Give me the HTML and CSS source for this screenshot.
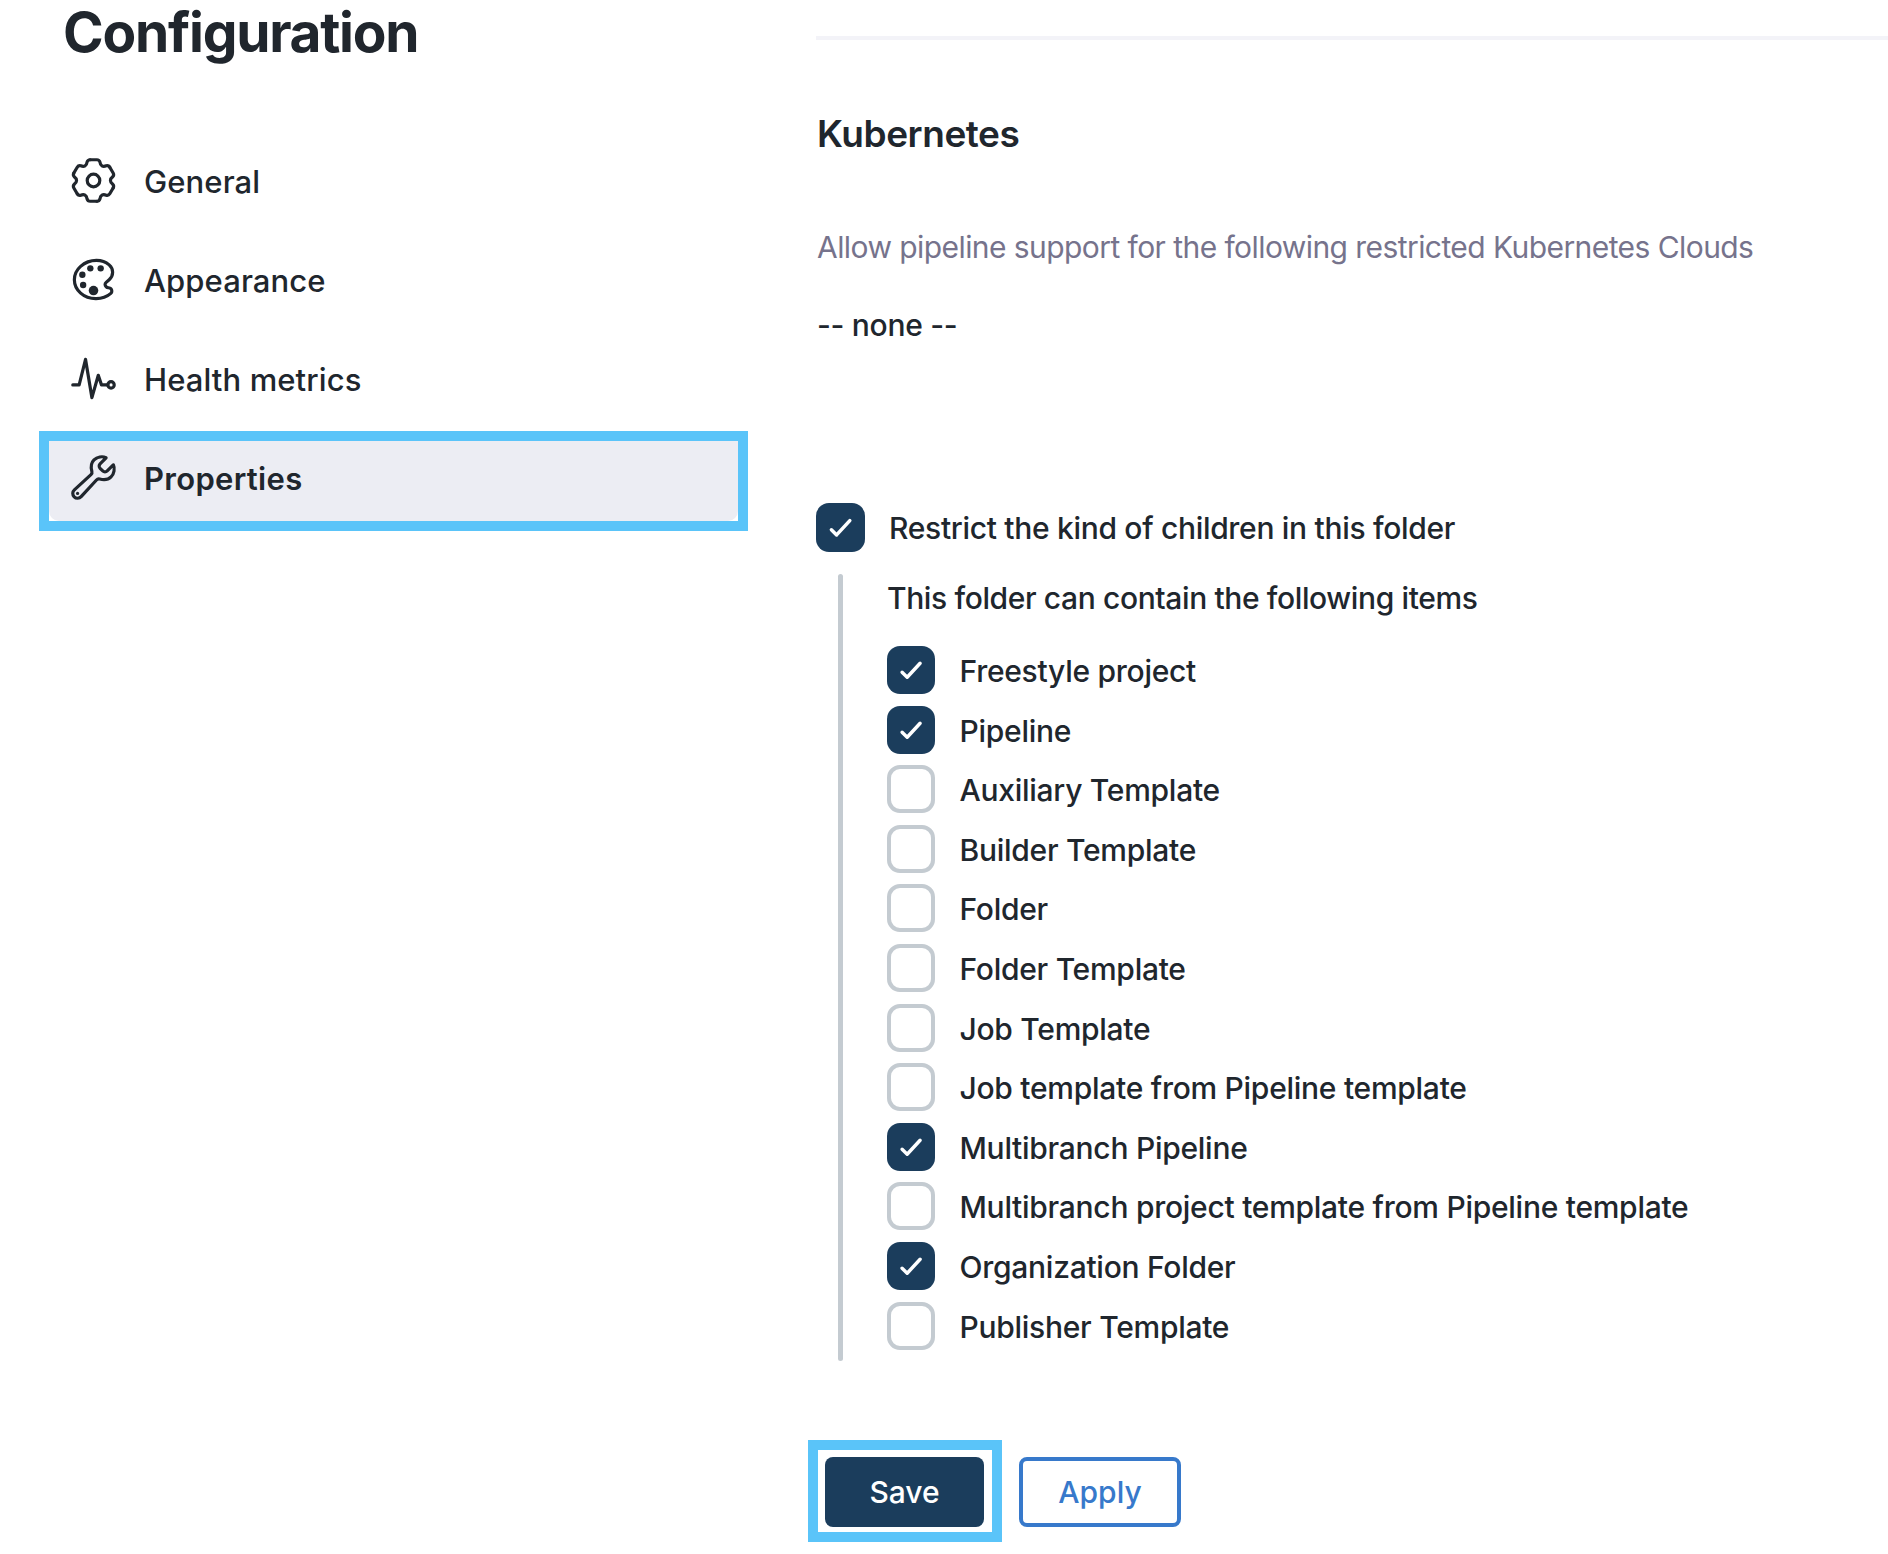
FILE: index.html
```html
<!DOCTYPE html>
<html lang="en">
<head>
<meta charset="utf-8">
<title>Configuration</title>
<link rel="stylesheet" href="styles.css">
</head>
<body>
<svg class="defs" aria-hidden="true">
  <symbol id="check" viewBox="0 0 49 49"><path d="M15.4 26.8 20.6 31.9 33.8 17.6"/></symbol>
  <path id="tooth" d="M-10-61H10Q17-61 19-54C20-43.5 27.7-39.1 37.3-43.5Q44.3-45.2 47.8-39.2"/>
</svg>
<div class="page">
  <aside class="sidebar">
    <h1 class="title">Configuration</h1>
    <nav class="nav">
      <a class="nav-item"><svg class="icon" viewBox="-75 -75 150 150"><g stroke-width="9"><use href="#tooth"/><use href="#tooth" transform="rotate(60)"/><use href="#tooth" transform="rotate(120)"/><use href="#tooth" transform="rotate(180)"/><use href="#tooth" transform="rotate(240)"/><use href="#tooth" transform="rotate(300)"/><circle r="18.5"/></g></svg><span>General</span></a>
      <a class="nav-item"><svg class="icon" viewBox="0 0 512 512"><path d="M430.11 347.9c-6.6-6.1-16.3-7.6-24.6-9-11.5-1.9-15.9-4-22.6-10-14.3-12.7-14.3-31.1 0-43.8l30.3-26.9c46.4-41 46.4-108.2 0-149.2-34.2-30.1-80.1-45-127.8-45-55.7 0-113.9 20.3-158.8 60.1-83.5 73.8-83.5 194.7 0 268.5 41.5 36.7 97.5 55 152.9 55.4h1.7c55.4 0 110-17.9 148.8-52.4 14.4-12.7 11.99-36.6.1-47.7z"/><g class="dots"><circle cx="144" cy="208" r="32"/><circle cx="152" cy="311" r="32"/><circle cx="224" cy="144" r="32"/><circle cx="256" cy="367" r="48"/><circle cx="328" cy="144" r="32"/></g></svg><span>Appearance</span></a>
      <a class="nav-item"><svg class="icon" viewBox="0 0 512 512"><path d="M48 320h64l64-256 64 384 64-224 32 96h64"/><circle cx="432" cy="320" r="32"/></svg><span>Health metrics</span></a>
      <div class="callout callout-nav">
        <a class="nav-item nav-item-active"><svg class="icon" viewBox="0 0 512 512"><path d="M393.87 190a32.1 32.1 0 01-45.25 0l-26.57-26.57a32.09 32.09 0 010-45.26L382.19 58a1 1 0 00-.3-1.64c-38.82-16.64-89.15-8.16-121.11 23.57-30.58 30.35-32.32 76-21.12 115.62a31.93 31.93 0 01-9.06 32.08L64 380a48.17 48.17 0 1068 68l153.86-167a31.93 31.93 0 0131.6-9.13c39.54 10.59 84.54 8.6 114.72-21.19 32.49-32 39.5-88.56 23.75-120.93a1 1 0 00-1.6-.26z"/><g class="dots"><circle cx="96" cy="416" r="16"/></g></svg><span>Properties</span></a>
      </div>
    </nav>
  </aside>
  <main class="main">
    <hr class="rule">
    <h2 class="section-title">Kubernetes</h2>
    <p class="description">Allow pipeline support for the following restricted Kubernetes Clouds</p>
    <p class="none">-- none --</p>
    <div class="option option-parent"><span class="box box-on"><svg><use href="#check"/></svg></span><span class="label">Restrict the kind of children in this folder</span></div>
    <section class="nested">
      <p class="nested-title">This folder can contain the following items</p>
      <div class="options">
        <div class="option"><span class="box box-on"><svg><use href="#check"/></svg></span><span class="label">Freestyle project</span></div>
        <div class="option"><span class="box box-on"><svg><use href="#check"/></svg></span><span class="label">Pipeline</span></div>
        <div class="option"><span class="box"></span><span class="label">Auxiliary Template</span></div>
        <div class="option"><span class="box"></span><span class="label">Builder Template</span></div>
        <div class="option"><span class="box"></span><span class="label">Folder</span></div>
        <div class="option"><span class="box"></span><span class="label">Folder Template</span></div>
        <div class="option"><span class="box"></span><span class="label">Job Template</span></div>
        <div class="option"><span class="box"></span><span class="label">Job template from Pipeline template</span></div>
        <div class="option"><span class="box box-on"><svg><use href="#check"/></svg></span><span class="label">Multibranch Pipeline</span></div>
        <div class="option"><span class="box"></span><span class="label">Multibranch project template from Pipeline template</span></div>
        <div class="option"><span class="box box-on"><svg><use href="#check"/></svg></span><span class="label">Organization Folder</span></div>
        <div class="option"><span class="box"></span><span class="label">Publisher Template</span></div>
      </div>
    </section>
    <div class="actions">
      <div class="callout callout-save"><button class="button button-primary">Save</button></div>
      <button class="button button-secondary">Apply</button>
    </div>
  </main>
</div>
</body>
</html>
```
FILE: styles.css
```css
* { box-sizing: border-box; }
body {
  margin: 0;
  background: #fff;
  color: #20262d;
  font: 450 30px/40px Inter, "Liberation Sans", sans-serif;
}
h1, h2, p { margin: 0; }
.defs { display: none; }
.page { display: grid; grid-template-columns: 816px 1fr; height: 1554px; overflow: hidden; }

.title {
  padding: 0 0 0 63px;
  font-size: 55px;
  font-weight: 700;
  line-height: 64px;
  letter-spacing: -1.25px;
}
.nav { display: flex; flex-direction: column; gap: 19px; padding-top: 80px; }
.nav-item {
  display: flex;
  align-items: center;
  gap: 25px;
  width: 689px;
  height: 80px;
  margin-left: 49px;
  padding: 0 0 7px 19px;
  font-size: 31px;
  letter-spacing: 0.1px;
  white-space: nowrap;
}
.nav-item span { padding-top: 2px; }
.icon {
  width: 51px;
  height: 51px;
  flex: none;
  fill: none;
  stroke: #20262d;
  stroke-width: 32px;
  stroke-linecap: round;
  stroke-linejoin: round;
}
.icon g { stroke-width: 9.4px; }
.dots { fill: #20262d; stroke: none; }
.callout { border: 10px solid #5ac4f9; }
.callout-nav { width: 709px; margin: -10px 0 0 39px; }
.nav-item-active {
  margin: 0;
  background: #ecedf3;
  border-radius: 0 0 10px 10px;
  font-weight: 600;
  letter-spacing: 0.3px;
}

.main { padding-top: 36px; }
.rule { height: 4px; margin: 0; border: 0; background: #f3f3f8; }
.section-title {
  margin-top: 70px;
  padding-left: 1px;
  font-size: 37px;
  font-weight: 600;
  line-height: 48px;
  letter-spacing: -0.45px;
}
.description {
  margin-top: 69px;
  padding-left: 1px;
  color: #76738c;
  font-weight: 400;
  letter-spacing: -0.57px;
}
.none { margin-top: 38px; padding-left: 1px; letter-spacing: -0.3px; }
.option { display: flex; gap: 24.5px; height: 59.6px; }
.option-parent { gap: 24px; height: 49px; margin-top: 158px; }
.label { padding-top: 5px; letter-spacing: -0.27px; white-space: nowrap; }
.option-parent .label { letter-spacing: -0.31px; }
.box {
  width: 48px;
  height: 48px;
  flex: none;
  border: 4px solid #c4cbd1;
  border-radius: 13px;
}
.box-on { border: 0; background: #1b3d5c; }
.option-parent .box { width: 49px; height: 49px; }
.box svg {
  display: block;
  width: 100%;
  height: 100%;
  fill: none;
  stroke: #fff;
  stroke-width: 3.5px;
  stroke-linecap: round;
  stroke-linejoin: round;
}
.nested {
  display: grid;
  grid-template-columns: 5px 1fr;
  column-gap: 44px;
  margin: 22px 0 0 22px;
}
.nested::before {
  content: "";
  grid-row: 1 / 3;
  background: #c4cbd1;
  border-radius: 3px;
}
.nested-title { padding-top: 4px; letter-spacing: -0.38px; }
.options { grid-column: 2; margin-top: 28px; }

.actions { display: flex; align-items: flex-start; gap: 17px; margin: 79px 0 0 -8px; }
.callout-save { padding: 7px 8px 5px 7px; }
.button {
  display: block;
  height: 70px;
  padding: 0;
  border: 0;
  border-radius: 8px;
  font: inherit;
}
.button-primary { width: 159px; background: #1b3d5c; color: #fff; }
.button-secondary {
  width: 162px;
  margin-top: 17px;
  border: 4px solid #3779cb;
  background: #fff;
  color: #3779cb;
}
```
